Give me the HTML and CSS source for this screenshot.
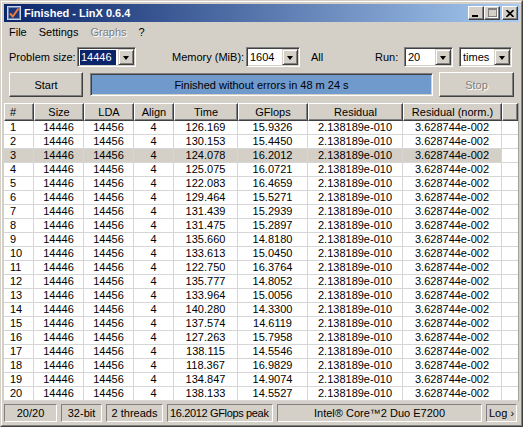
FILE: index.html
```html
<!DOCTYPE html>
<html>
<head>
<meta charset="utf-8">
<title>Finished - LinX 0.6.4</title>
<link rel="stylesheet" href="styles.css">
</head>
<body>
<div class="window">
  <div class="frame">
    <div class="titlebar">
      <svg class="app-icon" width="16" height="16" viewBox="0 0 16 16">
        <rect x="1.5" y="1.5" width="13" height="13" fill="#1b3777" stroke="#c9d3e6" stroke-width="1"/>
        <rect x="2.5" y="2.5" width="11" height="11" fill="none" stroke="#6f86b8" stroke-width="1"/>
        <path d="M4 8.5 L6.8 11.5 L12.5 3.5" fill="none" stroke="#f07a3a" stroke-width="2"/>
      </svg>
      <span class="title">Finished - LinX 0.6.4</span>
      <div class="caption-buttons">
        <span class="cap"><span class="glyph-min"></span></span>
        <span class="cap"><span class="glyph-max"></span></span>
        <span class="cap cap-close">
          <svg width="8" height="7" viewBox="0 0 8 7"><path d="M0.5 0 L7.5 7 M7.5 0 L0.5 7" stroke="#000" stroke-width="1.6"/></svg>
        </span>
      </div>
    </div>

    <div class="menubar">
      <span class="menu-item">File</span>
      <span class="menu-item">Settings</span>
      <span class="menu-item disabled">Graphs</span>
      <span class="menu-item">?</span>
    </div>

    <div class="toolbar">
      <span class="label lbl-size">Problem size:</span>
      <div class="combo combo-size"><span class="combo-text selected">14446</span><span class="combo-btn"></span></div>
      <span class="label lbl-mem">Memory (MiB):</span>
      <div class="combo combo-mem"><span class="combo-text">1604</span><span class="combo-btn"></span></div>
      <span class="label lbl-all">All</span>
      <span class="label lbl-run">Run:</span>
      <div class="combo combo-run"><span class="combo-text">20</span><span class="combo-btn"></span></div>
      <div class="combo combo-times"><span class="combo-text">times</span><span class="combo-btn"></span></div>
    </div>

    <div class="actions">
      <span class="btn btn-start">Start</span>
      <div class="progress">Finished without errors in 48 m 24 s</div>
      <span class="btn btn-stop disabled">Stop</span>
    </div>

    <div class="list">
      <table class="grid">
        <colgroup>
          <col class="c-num"><col class="c-size"><col class="c-lda"><col class="c-align"><col class="c-time"><col class="c-gflops"><col class="c-res"><col class="c-resn"><col class="c-fill">
        </colgroup>
        <thead>
          <tr><th class="left">#</th><th>Size</th><th>LDA</th><th>Align</th><th>Time</th><th>GFlops</th><th>Residual</th><th>Residual (norm.)</th><th class="fill"></th></tr>
        </thead>
        <tbody>
          <tr><td class="left">1</td><td>14446</td><td>14456</td><td>4</td><td>126.169</td><td>15.9326</td><td>2.138189e-010</td><td>3.628744e-002</td><td class="fill"></td></tr>
          <tr><td class="left">2</td><td>14446</td><td>14456</td><td>4</td><td>130.153</td><td>15.4450</td><td>2.138189e-010</td><td>3.628744e-002</td><td class="fill"></td></tr>
          <tr class="selected"><td class="left">3</td><td>14446</td><td>14456</td><td>4</td><td>124.078</td><td>16.2012</td><td>2.138189e-010</td><td>3.628744e-002</td><td class="fill"></td></tr>
          <tr><td class="left">4</td><td>14446</td><td>14456</td><td>4</td><td>125.075</td><td>16.0721</td><td>2.138189e-010</td><td>3.628744e-002</td><td class="fill"></td></tr>
          <tr><td class="left">5</td><td>14446</td><td>14456</td><td>4</td><td>122.083</td><td>16.4659</td><td>2.138189e-010</td><td>3.628744e-002</td><td class="fill"></td></tr>
          <tr><td class="left">6</td><td>14446</td><td>14456</td><td>4</td><td>129.464</td><td>15.5271</td><td>2.138189e-010</td><td>3.628744e-002</td><td class="fill"></td></tr>
          <tr><td class="left">7</td><td>14446</td><td>14456</td><td>4</td><td>131.439</td><td>15.2939</td><td>2.138189e-010</td><td>3.628744e-002</td><td class="fill"></td></tr>
          <tr><td class="left">8</td><td>14446</td><td>14456</td><td>4</td><td>131.475</td><td>15.2897</td><td>2.138189e-010</td><td>3.628744e-002</td><td class="fill"></td></tr>
          <tr><td class="left">9</td><td>14446</td><td>14456</td><td>4</td><td>135.660</td><td>14.8180</td><td>2.138189e-010</td><td>3.628744e-002</td><td class="fill"></td></tr>
          <tr><td class="left">10</td><td>14446</td><td>14456</td><td>4</td><td>133.613</td><td>15.0450</td><td>2.138189e-010</td><td>3.628744e-002</td><td class="fill"></td></tr>
          <tr><td class="left">11</td><td>14446</td><td>14456</td><td>4</td><td>122.750</td><td>16.3764</td><td>2.138189e-010</td><td>3.628744e-002</td><td class="fill"></td></tr>
          <tr><td class="left">12</td><td>14446</td><td>14456</td><td>4</td><td>135.777</td><td>14.8052</td><td>2.138189e-010</td><td>3.628744e-002</td><td class="fill"></td></tr>
          <tr><td class="left">13</td><td>14446</td><td>14456</td><td>4</td><td>133.964</td><td>15.0056</td><td>2.138189e-010</td><td>3.628744e-002</td><td class="fill"></td></tr>
          <tr><td class="left">14</td><td>14446</td><td>14456</td><td>4</td><td>140.280</td><td>14.3300</td><td>2.138189e-010</td><td>3.628744e-002</td><td class="fill"></td></tr>
          <tr><td class="left">15</td><td>14446</td><td>14456</td><td>4</td><td>137.574</td><td>14.6119</td><td>2.138189e-010</td><td>3.628744e-002</td><td class="fill"></td></tr>
          <tr><td class="left">16</td><td>14446</td><td>14456</td><td>4</td><td>127.263</td><td>15.7958</td><td>2.138189e-010</td><td>3.628744e-002</td><td class="fill"></td></tr>
          <tr><td class="left">17</td><td>14446</td><td>14456</td><td>4</td><td>138.115</td><td>14.5546</td><td>2.138189e-010</td><td>3.628744e-002</td><td class="fill"></td></tr>
          <tr><td class="left">18</td><td>14446</td><td>14456</td><td>4</td><td>118.367</td><td>16.9829</td><td>2.138189e-010</td><td>3.628744e-002</td><td class="fill"></td></tr>
          <tr><td class="left">19</td><td>14446</td><td>14456</td><td>4</td><td>134.847</td><td>14.9074</td><td>2.138189e-010</td><td>3.628744e-002</td><td class="fill"></td></tr>
          <tr><td class="left">20</td><td>14446</td><td>14456</td><td>4</td><td>138.133</td><td>14.5527</td><td>2.138189e-010</td><td>3.628744e-002</td><td class="fill"></td></tr>
        </tbody>
      </table>
    </div>

    <div class="statusbar">
      <span class="panel p-runs">20/20</span>
      <span class="panel p-bits">32-bit</span>
      <span class="panel p-threads">2 threads</span>
      <span class="panel p-peak">16.2012 GFlops peak</span>
      <span class="panel p-cpu">Intel® Core™2 Duo E7200</span>
      <span class="panel p-log">Log ›</span>
    </div>
  </div>
</div>
</body>
</html>
```

FILE: styles.css
```css
* { box-sizing: border-box; }

body {
  margin: 0;
  font-family: "Liberation Sans", Arial, sans-serif;
  font-size: 11px;
  color: #000;
  background: #d4d0c8;
}

.window {
  width: 523px;
  height: 427px;
  background: #d4d0c8;
  border: 1px solid;
  border-color: #d4d0c8 #404040 #404040 #d4d0c8;
}

.frame {
  height: 100%;
  border: 1px solid;
  border-color: #ffffff #808080 #808080 #ffffff;
  padding: 2px;
  display: flex;
  flex-direction: column;
}

/* Title bar */
.titlebar {
  height: 18px;
  flex: none;
  display: flex;
  align-items: center;
  padding: 0 1px 0 2px;
  background: linear-gradient(to right, #0a246a, #a6caf0);
  color: #fff;
  font-weight: bold;
}

.app-icon { flex: none; display: block; }

.title { margin-left: 2px; white-space: nowrap; }

.caption-buttons {
  margin-left: auto;
  display: flex;
  align-items: center;
}

.cap {
  width: 16px;
  height: 14px;
  background: #d4d0c8;
  border: 1px solid;
  border-color: #ffffff #404040 #404040 #ffffff;
  box-shadow: inset -1px -1px #808080;
  display: flex;
  align-items: center;
  justify-content: center;
}

.cap-close { margin-left: 2px; }

.glyph-min {
  width: 6px;
  height: 2px;
  background: #000;
  margin-top: 6px;
  margin-left: -2px;
}

.glyph-max {
  width: 9px;
  height: 9px;
  border: 1px solid #808080;
  border-top-width: 2px;
  box-shadow: 1px 1px #ffffff;
  margin-top: -1px;
}

/* Menu bar */
.menubar {
  height: 19px;
  flex: none;
  display: flex;
  align-items: center;
}

.menu-item { padding: 0 6px; }
.menu-item:first-child { padding-left: 5px; }
.menu-item.disabled { color: #808080; text-shadow: 1px 1px #ffffff; }

/* Toolbar row */
.toolbar {
  height: 20px;
  flex: none;
  margin-top: 6px;
  padding-left: 5px;
  display: flex;
  align-items: center;
}

.label { white-space: nowrap; flex: none; }
.lbl-size { width: 68px; }
.lbl-mem { width: 74px; margin-left: 36px; }
.lbl-all { width: 64px; margin-left: 11px; }
.lbl-run { width: 29px; }

.combo {
  height: 20px;
  flex: none;
  display: flex;
  align-items: stretch;
  background: #fff;
  border: 1px solid;
  border-color: #808080 #ffffff #ffffff #808080;
  box-shadow: inset 1px 1px #404040, inset -1px -1px #d4d0c8;
  padding: 1px;
}

.combo-size { width: 59px; }
.combo-mem { width: 54px; }
.combo-run { width: 49px; }
.combo-times { width: 53px; margin-left: 6px; }

.combo-text {
  flex: 1;
  padding-left: 2px;
  line-height: 16px;
  white-space: nowrap;
  overflow: hidden;
}

.combo-text.selected {
  background: #0a246a;
  color: #fff;
  margin: 1px 2px 0 1px;
  padding-left: 1px;
  line-height: 15px;
}

.combo-btn {
  width: 16px;
  flex: none;
  background: #d4d0c8;
  border: 1px solid;
  border-color: #d4d0c8 #404040 #404040 #d4d0c8;
  box-shadow: inset 1px 1px #ffffff, inset -1px -1px #808080;
  display: flex;
  align-items: center;
  justify-content: center;
}

.combo-btn::after {
  content: "";
  width: 0;
  height: 0;
  border-left: 3.5px solid transparent;
  border-right: 3.5px solid transparent;
  border-top: 4px solid #000;
  margin-top: 1px;
}

/* Action row */
.actions {
  height: 25px;
  flex: none;
  margin-top: 5px;
  padding-left: 5px;
  display: flex;
  align-items: center;
}

.btn {
  height: 25px;
  flex: none;
  display: flex;
  align-items: center;
  justify-content: center;
  background: #d4d0c8;
  border: 1px solid;
  border-color: #ffffff #404040 #404040 #ffffff;
  box-shadow: inset -1px -1px #808080;
}

.btn-start { width: 74px; }
.btn-stop { width: 75px; margin-left: 6px; }
.btn.disabled { color: #808080; text-shadow: 1px 1px #ffffff; }

.progress {
  width: 343px;
  height: 23px;
  flex: none;
  margin-left: 7px;
  display: flex;
  align-items: center;
  justify-content: center;
  background: #7099cc;
  border: 1px solid;
  border-color: #808080 #ffffff #ffffff #808080;
  box-shadow: inset 1px 1px #404040, inset -1px -1px #d4d0c8;
}

/* List */
.list {
  flex: none;
  margin-top: 6px;
  height: 298px;
  width: 515px;
  background: #fff;
  border-right: 1px solid #a0a0a0;
  overflow: hidden;
}

.grid {
  width: 514px;
  table-layout: fixed;
  border-collapse: separate;
  border-spacing: 0;
  font-size: 11px;
}

.c-num { width: 30px; }
.c-size { width: 50px; }
.c-lda { width: 50px; }
.c-align { width: 40px; }
.c-time { width: 64px; }
.c-gflops { width: 70px; }
.c-res { width: 95px; }
.c-resn { width: 99px; }
.c-fill { width: 16px; }

.grid th {
  height: 18px;
  padding: 0;
  font-weight: normal;
  text-align: center;
  white-space: nowrap;
  background: #d4d0c8;
  border: 1px solid;
  border-color: #ffffff #404040 #404040 #ffffff;
  box-shadow: inset -1px -1px #808080;
}

.grid td {
  height: 14px;
  padding: 0;
  line-height: 13px;
  text-align: center;
  white-space: nowrap;
  border-right: 1px solid #d6d6d6;
  border-bottom: 1px solid #d6d6d6;
}

.grid th.left { text-align: left; padding-left: 5px; }
.grid td.left { text-align: left; padding-left: 6px; }

.grid td.fill { border-right: none; }

.grid tr.selected td { background: #d4d0c8; }
.grid tr.selected td.fill { background: #fff; }

/* Status bar */
.statusbar {
  flex: none;
  height: 18px;
  margin-top: 3px;
  display: flex;
  gap: 4px;
}

.panel {
  flex: none;
  height: 18px;
  line-height: 16px;
  text-align: center;
  white-space: nowrap;
  overflow: hidden;
  border: 1px solid;
  border-color: #808080 #ffffff #ffffff #808080;
}

.p-runs { width: 53px; }
.p-bits { width: 41px; }
.p-threads { width: 57px; }
.p-peak { width: 106px; text-align: left; padding-left: 2px; letter-spacing: -0.35px; }
.p-cpu { width: 205px; }
.p-log { width: 31px; text-align: left; padding-left: 2px; }
```
